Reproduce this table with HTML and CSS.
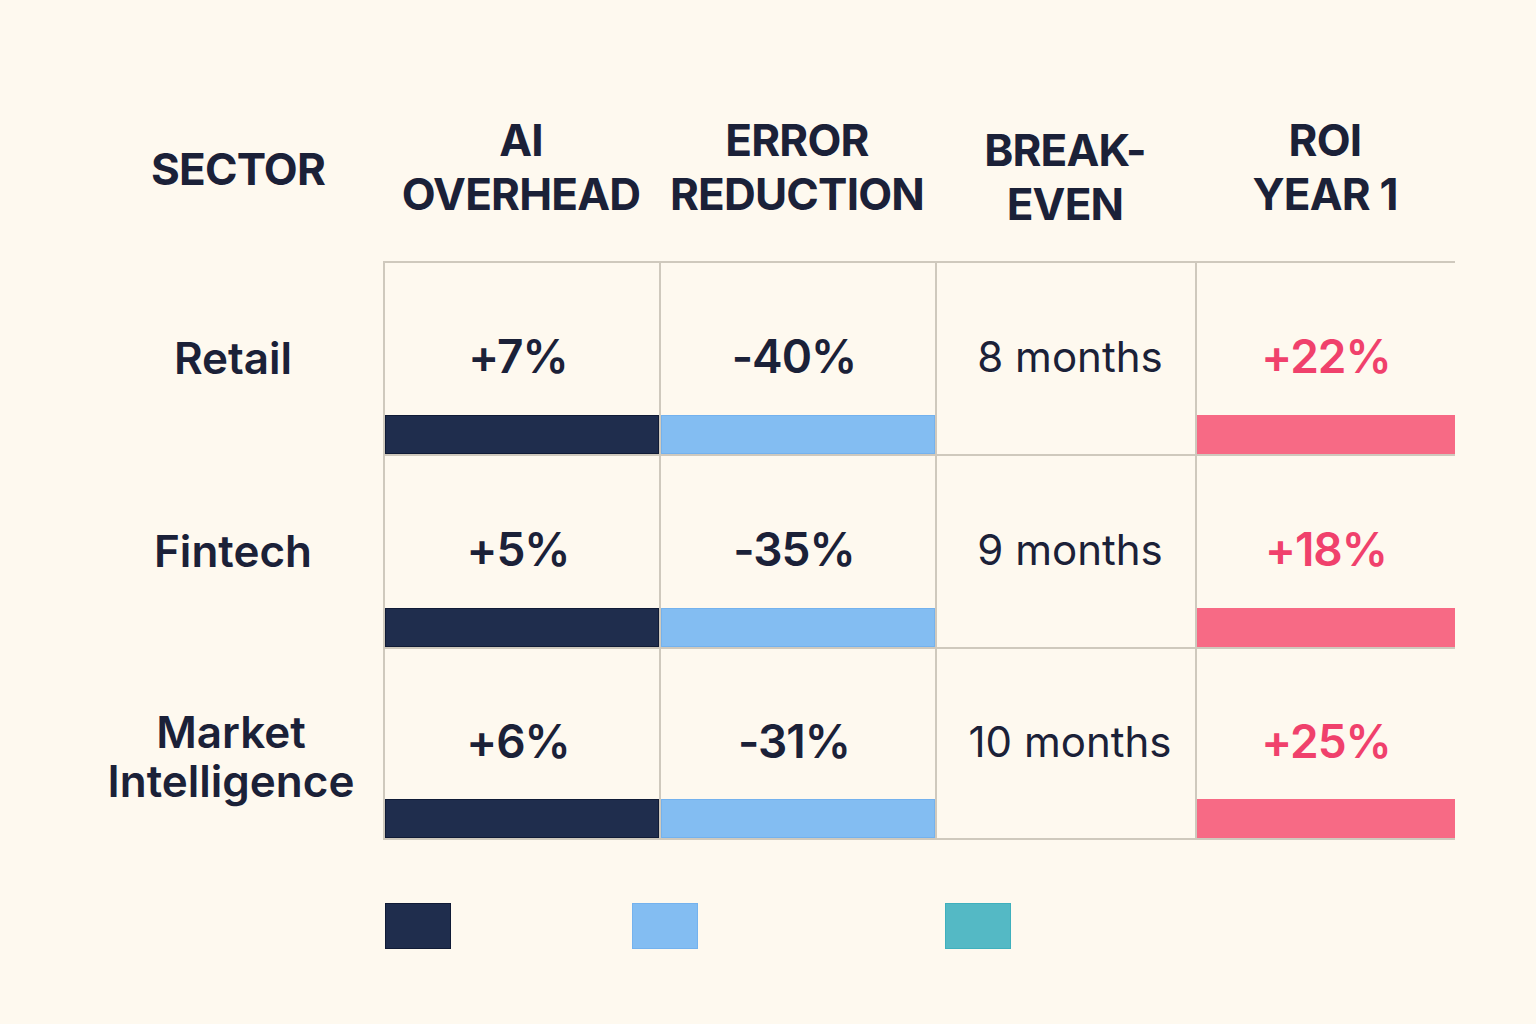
FILE: index.html
```html
<!DOCTYPE html>
<html lang="en">
<head>
<meta charset="utf-8">
<title>AI ROI by Sector</title>
<link rel="stylesheet" href="styles.css">
</head>
<body>
<div class="page">
  <div class="table">
    <div class="row head">
      <div class="hcell hsector">SECTOR</div>
      <div class="hcell">AI<br>OVERHEAD</div>
      <div class="hcell">ERROR<br>REDUCTION</div>
      <div class="hcell hlow">BREAK-<br>EVEN</div>
      <div class="hcell">ROI<br>YEAR 1</div>
    </div>

    <div class="row body">
      <div class="sector">Retail</div>
      <div class="cell"><div class="val">+7%</div><div class="bar navy"></div></div>
      <div class="cell"><div class="val">-40%</div><div class="bar blue"></div></div>
      <div class="cell"><div class="val months">8 months</div><div class="bar none"></div></div>
      <div class="cell last"><div class="val roi">+22%</div><div class="bar pink"></div></div>
    </div>

    <div class="row body">
      <div class="sector">Fintech</div>
      <div class="cell"><div class="val">+5%</div><div class="bar navy"></div></div>
      <div class="cell"><div class="val">-35%</div><div class="bar blue"></div></div>
      <div class="cell"><div class="val months">9 months</div><div class="bar none"></div></div>
      <div class="cell last"><div class="val roi">+18%</div><div class="bar pink"></div></div>
    </div>

    <div class="row body final">
      <div class="sector two">Market<br>Intelligence</div>
      <div class="cell"><div class="val">+6%</div><div class="bar navy"></div></div>
      <div class="cell"><div class="val">-31%</div><div class="bar blue"></div></div>
      <div class="cell"><div class="val months">10 months</div><div class="bar none"></div></div>
      <div class="cell last"><div class="val roi">+25%</div><div class="bar pink"></div></div>
    </div>
  </div>

  <div class="legend">
    <div class="swatch navy"></div>
    <div class="swatch blue"></div>
    <div class="swatch teal"></div>
  </div>
</div>
</body>
</html>
```

FILE: styles.css
```css
* { box-sizing: border-box; }

html, body {
  margin: 0;
  padding: 0;
  background: #fef9ef;
}

body {
  font-family: Inter, "Noto Sans", "Liberation Sans", sans-serif;
  color: #1b2138;
  width: 1536px;
  height: 1024px;
  overflow: hidden;
}

.page {
  padding: 100px 0 0 89px;
}

.row {
  display: grid;
  grid-template-columns: 294px 276px 276px 260px 260px;
}

.head {
  height: 161px;
  padding-bottom: 28px;
  align-items: center;
}

.hcell {
  text-align: center;
  font-size: 44px;
  font-weight: 700;
  line-height: 54px;
  letter-spacing: -0.8px;
}

.hsector { padding-top: 4px; padding-left: 4px; }
.hlow { padding-top: 20px; }

.body {
  height: 193px;
}

.sector {
  display: flex;
  align-items: center;
  justify-content: center;
  text-align: center;
  font-size: 44px;
  font-weight: 600;
  line-height: 49px;
  padding-top: 2px;
  padding-right: 6px;
}

.sector.two { padding-top: 26px; padding-right: 10px; }

.cell {
  display: flex;
  flex-direction: column;
  border-top: 2px solid #cfc9bd;
  border-left: 2px solid #cfc9bd;
}

.final .cell {
  border-bottom: 2px solid #cfc9bd;
}

.val {
  flex: 1;
  display: flex;
  align-items: center;
  justify-content: center;
  padding-top: 34px;
  font-size: 46px;
  font-weight: 600;
  letter-spacing: -1px;
  padding-right: 8px;
}

.val.months {
  font-size: 42px;
  font-weight: 400;
  letter-spacing: 0;
  padding-right: 0;
  padding-left: 8px;
}

.val.roi {
  color: #f0416c;
  padding-right: 0;
}

.bar {
  height: 39px;
  flex: none;
}

.bar.none { background: transparent; }

.navy {
  background: #1f2d4d;
  border: 1px solid #101b36;
}

.blue {
  background: #83bdf2;
  border: 1px solid #74b2ee;
}

.pink {
  background: #f76a85;
}

.teal {
  background: #54b9c5;
  border: 1px solid #3fb0bd;
}

.legend {
  display: grid;
  grid-template-columns: 247px 313px 66px;
  margin-top: 63px;
  padding-left: 296px;
}

.swatch {
  width: 66px;
  height: 46px;
}
```
